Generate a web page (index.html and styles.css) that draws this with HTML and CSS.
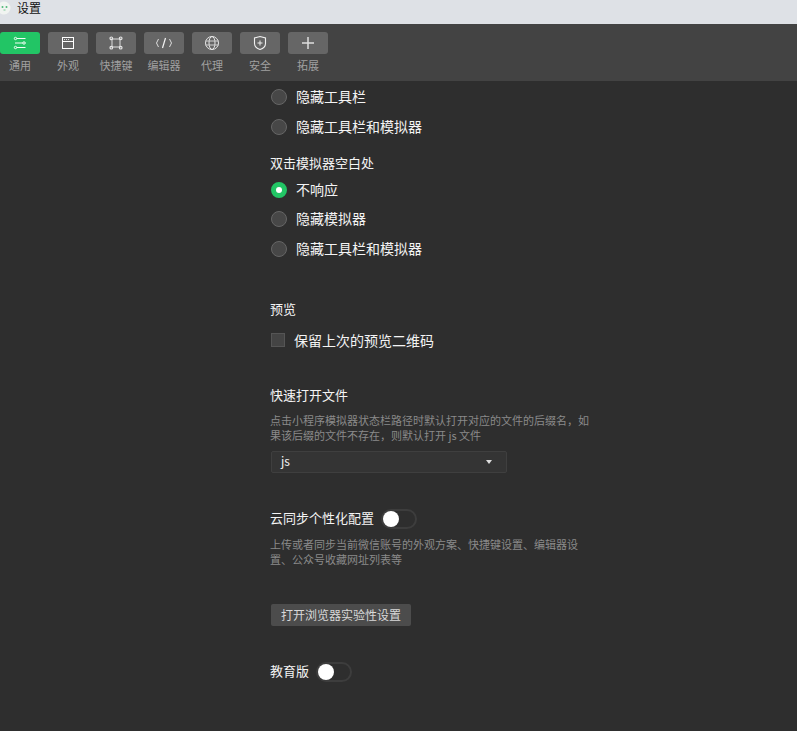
FILE: index.html
```html
<!DOCTYPE html>
<html lang="zh">
<head>
<meta charset="utf-8">
<title>设置</title>
<link rel="stylesheet" href="styles.css">
</head>
<body>
<header class="titlebar">
  <svg class="app-icon" width="12" height="14" viewBox="0 0 12 14"><circle cx="4" cy="7" r="6.500" fill="#f1f4f1"/><circle cx="2.500" cy="6" r="1" fill="#4fb878"/><circle cx="6.500" cy="6" r="1" fill="#4fb878"/><path d="M3.500 9h2" stroke="#7fc79a"/></svg>
  <span>设置</span>
</header>
<nav class="toolbar">
  <div class="tab"><div class="tab-btn active"><svg width="14" height="14" viewBox="0 0 14 14" fill="none" stroke="#f2fff7"><path d="M2 2.500h10.500M2 7h10.500M2 11.500h10.500"/><circle cx="2.500" cy="2.500" r="1.200" fill="#22c565"/><circle cx="11" cy="7" r="1.200" fill="#22c565"/><circle cx="2.500" cy="11.500" r="1.200" fill="#22c565"/></svg></div><span>通用</span></div>
  <div class="tab"><div class="tab-btn"><svg width="14" height="14" viewBox="0 0 14 14" fill="none" stroke="#fff"><rect x="1.500" y="1.500" width="11" height="11"/><path d="M1.500 5.500h11"/><path d="M3 3.500h1M5 3.500h1M7 3.500h1" stroke="#ddd"/></svg></div><span>外观</span></div>
  <div class="tab"><div class="tab-btn"><svg width="14" height="14" viewBox="0 0 14 14" fill="none" stroke="#c8c8c8" stroke-width="1.200"><rect x="3" y="3" width="8" height="8"/><circle cx="2.300" cy="2.300" r="1.300" stroke="#e4e4e4"/><circle cx="11.700" cy="2.300" r="1.300" stroke="#e4e4e4"/><circle cx="2.300" cy="11.700" r="1.300" stroke="#e4e4e4"/><circle cx="11.700" cy="11.700" r="1.300" stroke="#e4e4e4"/></svg></div><span>快捷键</span></div>
  <div class="tab"><div class="tab-btn"><svg width="18" height="14" viewBox="0 0 18 14" fill="none" stroke="#dcdcdc"><path d="M3.500 3 1.500 7 3.500 11M14.500 3 16.500 7 14.500 11"/><path d="M10.500 2 7.500 12" stroke="#f4f4f4" stroke-width="1.200"/></svg></div><span>编辑器</span></div>
  <div class="tab"><div class="tab-btn"><svg width="16" height="16" viewBox="0 0 16 16" fill="none" stroke="#e6e6e6"><circle cx="8" cy="8" r="6.500"/><ellipse cx="8" cy="8" rx="3" ry="6.500"/><path d="M1.500 6h13M1.500 10h13" stroke="#cfcfcf"/></svg></div><span>代理</span></div>
  <div class="tab"><div class="tab-btn"><svg width="14" height="16" viewBox="0 0 14 16" fill="none" stroke="#f0f0f0"><path d="M7 1.500 12.500 3V8.500C12.500 11.500 10 13.500 7 14.500C4 13.500 1.500 11.500 1.500 8.500V3Z" stroke-width="1.100"/><path d="M7 5.500v5M4.500 8h5"/></svg></div><span>安全</span></div>
  <div class="tab"><div class="tab-btn"><svg width="14" height="14" viewBox="0 0 14 14" fill="none" stroke="#dedede" stroke-width="1.500"><path d="M7 1v12M1 7h12"/></svg></div><span>拓展</span></div>
</nav>
<main class="content">
  <div class="radio-group top-group">
    <label class="radio"><i class="dot"></i><span>隐藏工具栏</span></label>
    <label class="radio"><i class="dot"></i><span>隐藏工具栏和模拟器</span></label>
  </div>
  <h3 class="heading dbl">双击模拟器空白处</h3>
  <div class="radio-group">
    <label class="radio"><i class="dot on"></i><span>不响应</span></label>
    <label class="radio"><i class="dot"></i><span>隐藏模拟器</span></label>
    <label class="radio"><i class="dot"></i><span>隐藏工具栏和模拟器</span></label>
  </div>
  <h3 class="heading preview">预览</h3>
  <label class="check"><i class="box"></i><span>保留上次的预览二维码</span></label>
  <h3 class="heading quick">快速打开文件</h3>
  <p class="desc">点击小程序模拟器状态栏路径时默认打开对应的文件的后缀名，如果该后缀的文件不存在，则默认打开 js 文件</p>
  <div class="select"><span>js</span><i class="caret"></i></div>
  <div class="switch-row cloud"><span>云同步个性化配置</span><i class="switch"></i></div>
  <p class="desc sync">上传或者同步当前微信账号的外观方案、快捷键设置、编辑器设置、公众号收藏网址列表等</p>
  <button class="btn">打开浏览器实验性设置</button>
  <div class="switch-row edu"><span>教育版</span><i class="switch"></i></div>
</main>
</body>
</html>
```
FILE: styles.css
```css
* { box-sizing: border-box; }
html, body { margin: 0; height: 100%; }
body {
  background: #2e2e2e;
  color: #f4f4f4;
  font-family: "Noto Sans CJK SC", "Liberation Sans", sans-serif;
  font-size: 13px;
  line-height: 18px;
  overflow: hidden;
}
.titlebar {
  height: 24px;
  background: #dee1e6;
  color: #111;
  font-size: 12px;
  display: flex;
  align-items: center;
  gap: 5px;
  padding-bottom: 8px;
}
.app-icon { flex: none; }
.toolbar {
  height: 57px;
  background: #434343;
  display: flex;
  gap: 8px;
  padding-top: 8px;
}
.tab {
  width: 40px;
  display: flex;
  flex-direction: column;
  align-items: center;
  gap: 3px;
  font-size: 11px;
  line-height: 16px;
  color: #a0a0a0;
  white-space: nowrap;
}
.tab-btn {
  width: 40px;
  height: 22px;
  border-radius: 3px;
  background: #666;
  display: flex;
  align-items: center;
  justify-content: center;
}
.tab-btn.active { background: #22c565; }
.content {
  width: 320px;
  margin-left: 270px;
  display: flex;
  flex-direction: column;
  align-items: flex-start;
}
.radio-group { display: flex; flex-direction: column; }
.top-group { margin-top: 1px; }
.radio {
  height: 29.500px;
  display: flex;
  align-items: center;
  gap: 9px;
  padding-left: 1px;
  font-size: 14px;
}
.top-group .radio { height: 30px; }
.radio span { padding-bottom: 2px; }
.dot {
  width: 16px;
  height: 16px;
  border-radius: 50%;
  background: #474747;
  border: 1px solid #666;
  flex: none;
}
.dot.on {
  background: #22c565;
  border: 5px solid #22c565;
}
.dot.on::after {
  content: "";
  display: block;
  width: 6px;
  height: 6px;
  border-radius: 50%;
  background: #fff;
}
.heading {
  margin: 0;
  font-size: 13px;
  font-weight: 400;
  line-height: 18px;
}
.dbl { margin-top: 12px; margin-bottom: 3px; }
.preview { margin-top: 36px; }
.check {
  display: flex;
  align-items: center;
  gap: 9px;
  height: 20px;
  margin-top: 12px;
  padding-left: 1px;
  font-size: 14px;
}
.box {
  width: 14px;
  height: 14px;
  background: #444;
  border: 1px solid #555;
  flex: none;
}
.quick { margin-top: 36px; }
.desc {
  margin: 9px 0 0;
  font-size: 11px;
  line-height: 15px;
  color: #8a8a8a;
}
.desc.sync { margin-top: 8px; }
.select {
  width: 236px;
  height: 22px;
  margin: 8px 0 0 1px;
  background: #343434;
  border: 1px solid #3f3f3f;
  border-radius: 2px;
  display: flex;
  align-items: center;
  justify-content: space-between;
  padding: 0 14px 2px 9px;
  font-size: 12px;
}
.caret {
  width: 0;
  height: 0;
  margin-top: 2px;
  border-left: 3px solid transparent;
  border-right: 3px solid transparent;
  border-top: 4px solid #ddd;
}
.switch-row { display: flex; align-items: center; gap: 7px; }
.switch-row span { padding-bottom: 2px; }
.cloud { margin-top: 36px; }
.edu { margin-top: 36px; }
.switch {
  width: 36px;
  height: 20px;
  border-radius: 10px;
  background: #2e2e2e;
  border: 2px solid #3d3d3d;
  position: relative;
  flex: none;
}
.switch::after {
  content: "";
  position: absolute;
  left: 0;
  top: 0;
  width: 16px;
  height: 16px;
  border-radius: 50%;
  background: #fff;
}
.btn {
  margin: 37px 0 0 1px;
  width: 140px;
  height: 22px;
  border: 0;
  border-radius: 2px;
  background: #4c4c4c;
  color: #d8d8d8;
  font: inherit;
  font-size: 12px;
  padding: 0;
}
```
